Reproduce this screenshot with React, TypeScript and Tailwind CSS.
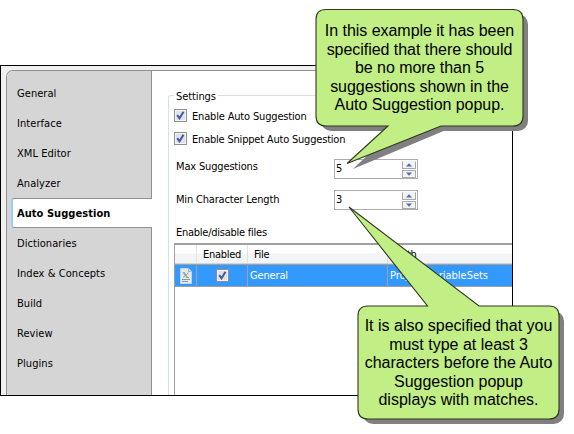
import React from "react";

const ui = "font-['DejaVu_Sans_Condensed','DejaVu_Sans',sans-serif]";

const before = ["General", "Interface", "XML Editor", "Analyzer"];
const after = ["Dictionaries", "Index & Concepts", "Build", "Review", "Plugins"];

function NavItem({ label }: { label: string }) {
  return <div className="flex h-[30px] items-center pl-[10px] pt-[2px] tracking-[0.06px]">{label}</div>;
}

function Check() {
  return (
    <span className="block size-[13px] shrink-0 border border-[#8e8f8f] bg-[#f4f4f4] p-px">
      <svg viewBox="0 0 9 9" className="block size-[9px] bg-[#dfe2e8]">
        <path d="M1.2 4.2 L3.5 7.3 L7.5 .7" fill="none" stroke="#4359a0" strokeWidth="2" />
      </svg>
    </span>
  );
}

function SpinButton({ up }: { up?: boolean }) {
  return (
    <div className={`flex h-[8px] w-[14px] items-center justify-center border border-[#a9a9b0] bg-[#f3f3f3] ${up ? "border-t-[#f3f3f3]" : ""}`}>
      <svg viewBox="0 0 6 4" className="h-[4px] w-[6px]">
        <path d={up ? "M0 3.5 L3 .2 L6 3.5Z" : "M0 .5 L3 3.8 L6 .5Z"} fill="#5169b5" />
      </svg>
    </div>
  );
}

function Spinner({ value }: { value: string }) {
  return (
    <div className="flex h-[20px] w-[84px] items-center justify-between border border-[#abadb3] bg-white pl-px pr-px">
      <span>{value}</span>
      <div className="flex flex-col gap-px">
        <SpinButton up />
        <SpinButton />
      </div>
    </div>
  );
}

function FileIcon() {
  return (
    <svg viewBox="0 0 12 16" className="h-4 w-3">
      <path d="M.5 .5H8.5L11.5 3.5V15.5H.5Z" fill="#e3eaea" stroke="#cbd5d8" />
      <path d="M8.5 .5V3.5H11.5" fill="none" stroke="#a2b3b8" />
      <path d="M3.800 4.800L7.300 9.500" stroke="#8ea4a7" strokeWidth="1.6" />
      <path d="M8.500 4.800L3 9.500M2.500 4.800H5M6.500 9.500H9" stroke="#8ea4a7" strokeWidth="1" />
      <path d="M2 11.5H10M2 13.5H8" stroke="#7f9ba0" />
    </svg>
  );
}

function CalloutText({ lines }: { lines: string[] }) {
  return (
    <>
      {lines.map((l) => (
        <div key={l} className="whitespace-nowrap">{l}</div>
      ))}
    </>
  );
}

export default function App() {
  return (
    <div className={`relative h-[434px] w-[574px] overflow-hidden bg-white pt-[65px] text-[11px] leading-[14px] text-black ${ui}`}>
      <div className="h-[331px] w-[513px] overflow-hidden border border-black bg-[#f0f0f0] pl-[5px] pt-1">
        <div className="flex h-[326px] overflow-hidden rounded-tl-[7px] border-l border-t border-[#919191] bg-white">
          <nav className="flex w-[145px] shrink-0 flex-col bg-[#d5d5d5]">
            <div className="border-r border-[#919191] pt-[7px]">
              {before.map((l) => <NavItem key={l} label={l} />)}
            </div>
            <div className="ml-1 flex h-[30px] items-center rounded-l-[3px] border-y border-l-2 border-y-[#919191] border-l-[#99ccff] bg-white pl-1 pt-[2px] font-bold tracking-[0.05px]">
              Auto Suggestion
            </div>
            <div className="flex-1 border-r border-[#919191]">
              {after.map((l) => <NavItem key={l} label={l} />)}
            </div>
          </nav>
          <main className="min-w-0 flex-1 pl-4 pt-[18px]">
            <div className="flex h-[14px] w-[400px]">
              <span className="mt-[6px] h-2 w-[6px] rounded-tl-[3px] border-l border-t border-[#d5dfe5]" />
              <span className="px-[2px] pt-px tracking-[-0.1px]">Settings</span>
              <span className="mt-[6px] flex-1 border-t border-[#d5dfe5]" />
            </div>
            <div className="h-[300px] border-l border-[#d5dfe5] pl-[5px] pt-[6px]">
              <div className="flex h-[13px] items-center gap-[5px] whitespace-nowrap tracking-[-0.17px]"><Check /><span className="pt-[2px]">Enable Auto Suggestion</span></div>
              <div className="mt-[10px] flex h-[13px] items-center gap-[5px] whitespace-nowrap tracking-[-0.2px]"><Check /><span className="pt-[2px]">Enable Snippet Auto Suggestion</span></div>
              <div className="mt-[14px] flex h-5 items-center">
                <span className="w-[160px] pb-[5px] pl-[2px] tracking-[-0.16px]">Max Suggestions</span><Spinner value="5" />
              </div>
              <div className="mt-[11px] flex h-5 items-center">
                <span className="w-[160px] pb-px pl-[2px] tracking-[-0.18px]">Min Character Length</span><Spinner value="3" />
              </div>
              <div className="mt-[16px] pl-[2px] tracking-[-0.25px]">Enable/disable files</div>
              <div className="mt-[3px] h-[160px] border-l border-t-2 border-[#a0a0a0]">
                <div className="grid h-[19px] grid-cols-[22px_51px_140px_1fr] items-center border-b border-[#d5d5d5] bg-linear-to-b from-white from-45% to-[#f3f4f6] to-50% tracking-[-0.3px]">
                  <span className="h-full border-r border-[#e2e3e5]" />
                  <span className="flex h-full items-center justify-center border-r border-[#e2e3e5] pt-[2px]">Enabled</span>
                  <span className="flex h-full items-center border-r border-[#e2e3e5] pl-[6px] pt-[2px]">File</span>
                  <span className="pl-2 pt-[2px]">Path</span>
                </div>
                <div className="grid h-[23px] grid-cols-[22px_51px_140px_1fr] items-center border-y border-[#a0a0a0] bg-[#3399ff] text-white">
                  <span className="flex h-full items-center justify-center border-r border-[#a0a0a0]"><FileIcon /></span>
                  <span className="flex h-full items-center justify-center border-r border-[#a0a0a0]"><Check /></span>
                  <span className="flex h-full items-center border-r border-[#a0a0a0] pl-[2px] pt-px tracking-[-0.15px]">General</span>
                  <span className="pl-[2px] pt-px tracking-[-0.03px]">Project:VariableSets</span>
                </div>
              </div>
            </div>
          </main>
        </div>
      </div>

      {/* Callout balloons float above the options window */}
      <svg viewBox="0 0 574 434" className="absolute inset-0 h-[434px] w-[574px]">
        <g fill="#808080">
          <rect x="321" y="14" width="207" height="117" rx="10" />
          <path d="M394 130L353 169L446 130Z" />
          <rect x="363" y="311" width="201" height="113" rx="10" />
        </g>
        <g fill="#c1ee85" stroke="#30371f" strokeWidth="1.1">
          <path d="M326 9.5H513Q523 9.5 523 19.5V116Q523 126 513 126H441L347 163.5L388 126H326Q316 126 316 116V19.5Q316 9.5 326 9.5Z" />
          <path d="M368 306H427.500L349 207L479 306H549Q559 306 559 316V409Q559 419 549 419H368Q358 419 358 409V316Q358 306 368 306Z" />
        </g>
      </svg>
      <div className="absolute left-[316px] top-[22px] w-[207px] text-center font-['Liberation_Sans',Arial,sans-serif] text-[16px] leading-[18.5px] tracking-[-0.04px]">
        <CalloutText lines={["In this example it has been", "specified that there should", "be no more than 5", "suggestions shown in the", "Auto Suggestion popup."]} />
      </div>
      <div className="absolute left-[358px] top-[317px] w-[201px] text-center font-['Liberation_Sans',Arial,sans-serif] text-[16px] leading-[18.5px]">
        <CalloutText lines={["It is also specified that you", "must type at least 3", "characters before the Auto", "Suggestion popup", "displays with matches."]} />
      </div>
    </div>
  );
}
